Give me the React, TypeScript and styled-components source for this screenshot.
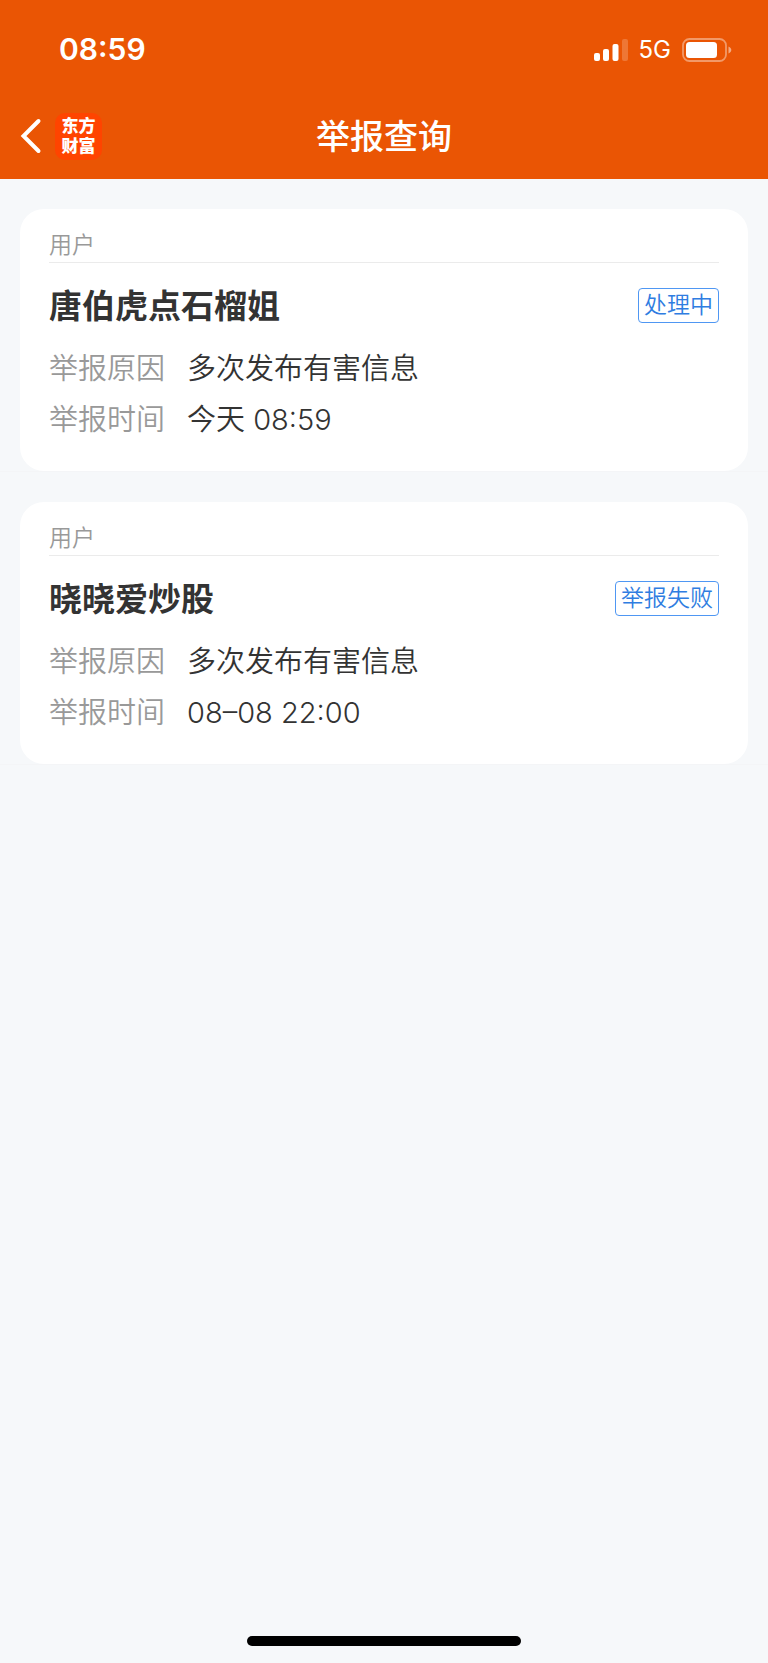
import React from "react";
import styled, { createGlobalStyle } from "styled-components";

const GlobalStyle = createGlobalStyle`
  * { box-sizing: border-box; }
  body {
    margin: 0;
    background: #f6f8fa;
    color: #333333;
    font-family: Inter, "Noto Sans CJK SC", sans-serif;
  }
`;

const Page = styled.div`
  display: flex;
  flex-direction: column;
  min-height: 100vh;
`;

const Header = styled.header`
  background: #ea5504;
  color: #ffffff;
`;

const StatusBar = styled.div`
  display: flex;
  align-items: center;
  justify-content: space-between;
  height: 93px;
  padding: 5px 36px 0 59px;
`;

const Clock = styled.time`
  font-size: 30px;
  font-weight: 600;
  line-height: 36px;
`;

const StatusIcons = styled.div`
  display: flex;
  align-items: center;
  gap: 11px;
  padding-top: 2px;
`;

const Network = styled.span`
  font-size: 24px;
  line-height: 30px;
`;

const NavBar = styled.nav`
  display: grid;
  grid-template-columns: 1fr auto 1fr;
  align-items: center;
  height: 86px;
  padding: 0 20px;
`;

const NavStart = styled.div`
  display: flex;
  align-items: center;
  gap: 13px;
`;

const BackButton = styled.button`
  display: flex;
  padding: 0;
  border: 0;
  background: none;
  color: inherit;
  cursor: pointer;
`;

const Logo = styled.a`
  display: flex;
  flex-direction: column;
  align-items: center;
  justify-content: center;
  width: 47px;
  height: 47px;
  border-radius: 10px;
  background: #ff4400;
  color: #ffffff;
  font-size: 17px;
  font-weight: 900;
  line-height: 20px;
  text-decoration: none;
`;

const Title = styled.h1`
  margin: 0;
  padding-top: 2px;
  font-size: 34px;
  font-weight: 500;
  line-height: 48px;
`;

const ReportList = styled.ul`
  flex: 1;
  margin: 0;
  padding: 30px 0;
  list-style: none;
`;

const ReportItem = styled.li`
  padding: 0 20px;
  margin-bottom: 30px;
  border-bottom: 1px solid #f4f5f7;
`;

const Card = styled.article`
  padding: 20px 29px 26px;
  border-radius: 24px;
  background: #ffffff;
`;

const Category = styled.div`
  border-bottom: 1px solid #ebebeb;
  color: #999999;
  font-size: 23px;
  font-weight: 350;
  line-height: 33px;
`;

const CardHeading = styled.div`
  display: flex;
  align-items: center;
  justify-content: space-between;
  height: 80px;
  padding-top: 5px;
`;

const UserName = styled.h2`
  margin: 0;
  font-size: 33px;
  font-weight: 600;
  line-height: 48px;
`;

const StatusTag = styled.span`
  padding: 0 5px;
  border: 1px solid #4f97f3;
  border-radius: 4px;
  color: #2f7de1;
  font-size: 23px;
  font-weight: 350;
  line-height: 33px;
`;

const Details = styled.dl`
  margin: 0;
`;

const DetailRow = styled.div`
  display: flex;
  gap: 22px;
  font-size: 29px;
  font-weight: 350;
  line-height: 51px;
`;

const DetailLabel = styled.dt`
  color: #999999;
`;

const DetailValue = styled.dd`
  margin: 0;
`;

const HomeIndicator = styled.div`
  align-self: center;
  width: 274px;
  height: 10px;
  margin-bottom: 17px;
  border-radius: 5px;
  background: #000000;
`;

interface Report {
  category: string;
  name: string;
  status: string;
  reason: string;
  time: string;
}

const reports: Report[] = [
  { category: "用户", name: "唐伯虎点石榴姐", status: "处理中", reason: "多次发布有害信息", time: "今天 08:59" },
  { category: "用户", name: "晓晓爱炒股", status: "举报失败", reason: "多次发布有害信息", time: "08–08 22:00" },
];

const SignalIcon = () => (
  <svg width="34" height="24" viewBox="0 0 34 24" fill="#fff" aria-hidden="true">
    <rect x="0" y="15" width="6" height="8" rx="2" />
    <rect x="9" y="11" width="6" height="12" rx="2" />
    <rect x="18.500" y="6" width="6" height="17" rx="2" />
    <rect x="28" y="1" width="6" height="22" rx="2" opacity="0.2" />
  </svg>
);

const BatteryIcon = () => (
  <svg width="50" height="24" viewBox="0 0 50 24" fill="none" aria-hidden="true">
    <rect x="1" y="1" width="43" height="22" rx="6.500" stroke="#fff" strokeOpacity="0.4" strokeWidth="1.800" />
    <rect x="4" y="4" width="31" height="16" rx="3.500" fill="#fff" />
    <path d="M46.500 8.500C48.300 9.200 49.300 10.500 49.300 12S48.300 14.800 46.500 15.500Z" fill="#fff" fillOpacity="0.5" />
  </svg>
);

const BackIcon = () => (
  <svg width="22" height="36" viewBox="0 0 22 36" fill="none" aria-hidden="true">
    <path d="M18.500 3L3.500 18L18.500 33" stroke="#fff" strokeWidth="4" strokeLinecap="round" strokeLinejoin="miter" />
  </svg>
);

const ReportCard = ({ report }: { report: Report }) => (
  <Card>
    <Category>{report.category}</Category>
    <CardHeading>
      <UserName>{report.name}</UserName>
      <StatusTag>{report.status}</StatusTag>
    </CardHeading>
    <Details>
      <DetailRow>
        <DetailLabel>举报原因</DetailLabel>
        <DetailValue>{report.reason}</DetailValue>
      </DetailRow>
      <DetailRow>
        <DetailLabel>举报时间</DetailLabel>
        <DetailValue>{report.time}</DetailValue>
      </DetailRow>
    </Details>
  </Card>
);

export default function App() {
  return (
    <Page lang="zh-CN">
      <GlobalStyle />
      <Header>
        <StatusBar>
          <Clock>08:59</Clock>
          <StatusIcons>
            <SignalIcon />
            <Network>5G</Network>
            <BatteryIcon />
          </StatusIcons>
        </StatusBar>
        <NavBar>
          <NavStart>
            <BackButton type="button" aria-label="返回">
              <BackIcon />
            </BackButton>
            <Logo href="#">
              <span>东方</span>
              <span>财富</span>
            </Logo>
          </NavStart>
          <Title>举报查询</Title>
        </NavBar>
      </Header>
      <ReportList>
        {reports.map((report) => (
          <ReportItem key={report.name}>
            <ReportCard report={report} />
          </ReportItem>
        ))}
      </ReportList>
      <HomeIndicator />
    </Page>
  );
}
